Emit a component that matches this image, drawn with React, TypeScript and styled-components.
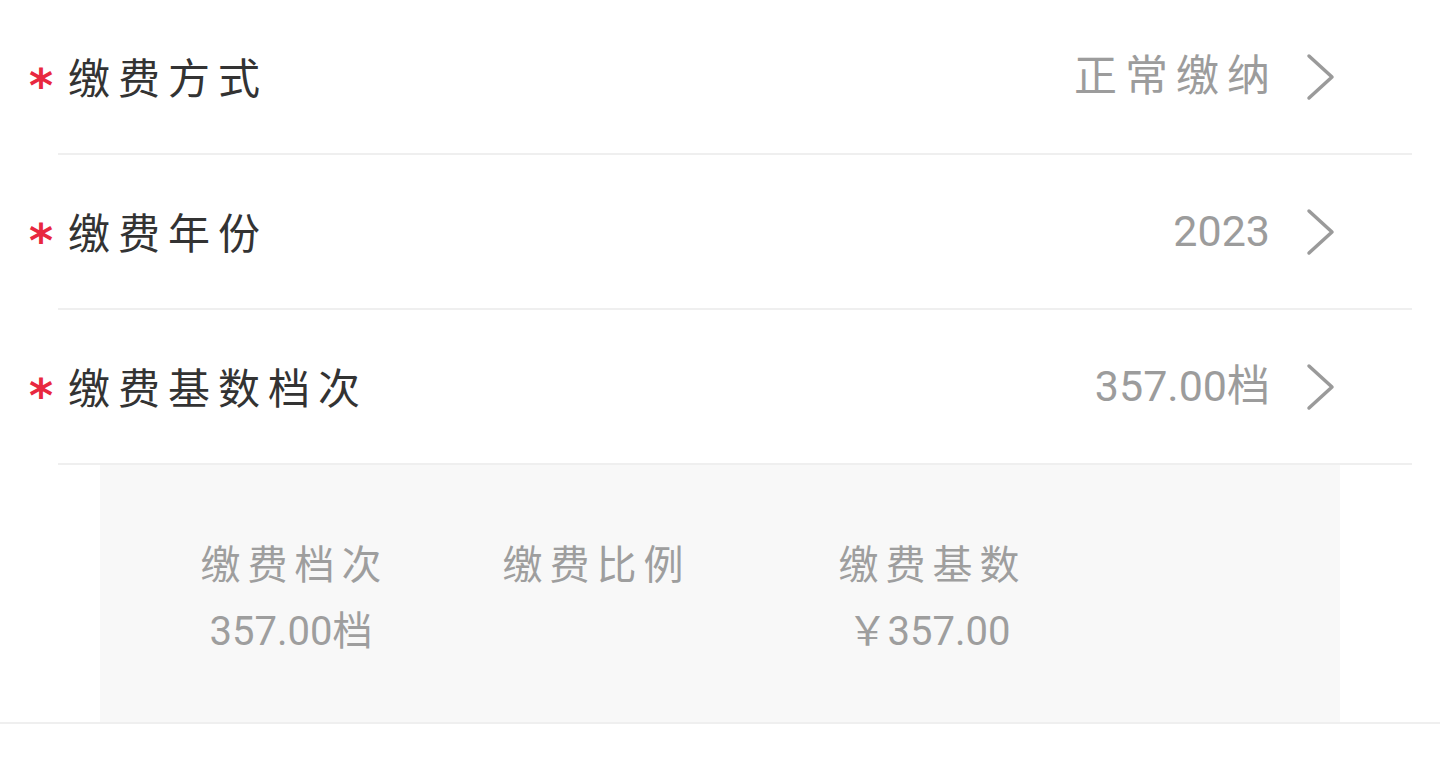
import styled, { createGlobalStyle } from 'styled-components'

const GlobalStyle = createGlobalStyle`
    html, body {
        margin: 0;
        padding: 0;
        background: #ffffff;
    }
    body {
        font-family: "Noto Sans CJK SC", "Noto Sans", sans-serif;
    }
`

const Page = styled.div`
    width: 1440px;
    height: 760px;
    background: #ffffff;
    overflow: hidden;
`

const Row = styled.div`
    display: flex;
    align-items: center;
    height: 155px;
`

const Mark = styled.span`
    width: 58px;
    padding-left: 29px;
    box-sizing: border-box;
    color: #e8283f;
    font-family: "DejaVu Sans", sans-serif;
    font-size: 46px;
    font-weight: bold;
    line-height: 1;
    margin-top: 16px;
`

const Body = styled.div`
    flex: 1;
    height: 153px;
    margin-right: 28px;
    padding: 0 77px 0 10px;
    display: flex;
    align-items: center;
    border-bottom: 2px solid #efefef;
`

const Label = styled.span`
    font-family: "Noto Sans CJK SC", sans-serif;
    font-size: 42px;
    letter-spacing: 8px;
    color: #333333;
    line-height: 1.2;
`

const Value = styled.span<{ $ls: number }>`
    margin-left: auto;
    font-family: Roboto, "Noto Sans CJK SC", sans-serif;
    font-size: 43px;
    line-height: 1.2;
    color: #9c9c9c;
    letter-spacing: ${p => p.$ls}px;
    margin-right: ${p => 35 - p.$ls}px;
`

const Chevron = () => (
    <svg width="30" height="48" viewBox="0 0 30 48">
        <polyline points="4,3 27,24 4,45" fill="none" stroke="#9a9a9a" strokeWidth="3.5" strokeLinecap="round" strokeLinejoin="round" />
    </svg>
)

const DetailWrap = styled.div`
    border-bottom: 2px solid #efefef;
`

const DetailPanel = styled.div`
    margin: 0 100px;
    height: 257px;
    background: #f8f8f8;
    box-sizing: border-box;
    padding: 73px 0 0 81px;
    display: grid;
    grid-template-columns: 302px 336px 220px;
    align-content: start;
`

const Column = styled.div`
    width: 220px;
    display: flex;
    flex-direction: column;
    align-items: center;
    gap: 22px;
    color: #9e9e9e;
    white-space: nowrap;
`

const ColumnTitle = styled.span`
    font-family: "Noto Sans CJK SC", sans-serif;
    font-size: 40px;
    letter-spacing: 7px;
    padding-left: 7px;
    line-height: 48px;
    height: 48px;
`

const ColumnValue = styled.span`
    font-family: Roboto, "Noto Sans CJK SC", sans-serif;
    font-size: 40px;
    line-height: 48px;
    height: 48px;
`

const rows = [
    { label: '缴费方式', value: '正常缴纳', ls: 8 },
    { label: '缴费年份', value: '2023', ls: 0 },
    { label: '缴费基数档次', value: '357.00档', ls: 0 },
]

const details = [
    { title: '缴费档次', value: '357.00档' },
    { title: '缴费比例', value: '' },
    { title: '缴费基数', value: '￥357.00' },
]

export default function App() {
    return <Page>
        <GlobalStyle />
        {rows.map((row) => (
            <Row key={row.label}>
                <Mark>*</Mark>
                <Body>
                    <Label>{row.label}</Label>
                    <Value $ls={row.ls}>{row.value}</Value>
                    <Chevron />
                </Body>
            </Row>
        ))}
        <DetailWrap>
            <DetailPanel>
                {details.map((d) => (
                    <Column key={d.title}>
                        <ColumnTitle>{d.title}</ColumnTitle>
                        <ColumnValue>{d.value}</ColumnValue>
                    </Column>
                ))}
            </DetailPanel>
        </DetailWrap>
    </Page>
}
